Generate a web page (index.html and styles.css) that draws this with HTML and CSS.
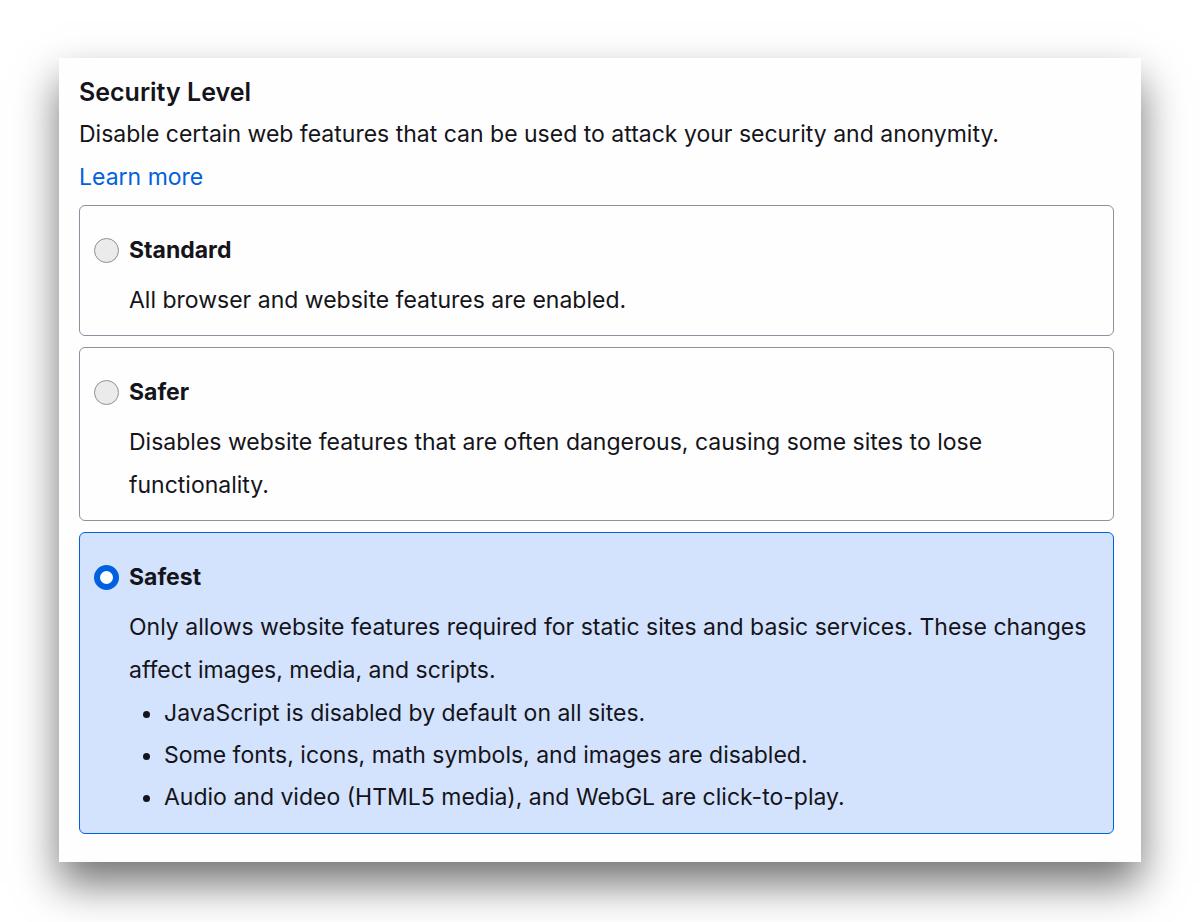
FILE: index.html
```html
<!DOCTYPE html>
<html lang="en">
<head>
  <meta charset="UTF-8">
  <title>Security Level</title>
  <link rel="stylesheet" href="styles.css">
</head>
<body>
  <section class="panel">
    <h2 class="title">Security Level</h2>
    <p class="intro">Disable certain web features that can be used to attack your security and anonymity.</p>
    <a href="#" class="learn">Learn more</a>
    <div class="levels">
      <label class="level">
        <span class="head"><span class="radio"></span>Standard</span>
        <span class="desc">All browser and website features are enabled.</span>
      </label>
      <label class="level">
        <span class="head"><span class="radio"></span>Safer</span>
        <span class="desc">Disables website features that are often dangerous, causing some sites to lose functionality.</span>
      </label>
      <label class="level selected">
        <span class="head"><span class="radio"></span>Safest</span>
        <span class="desc">Only allows website features required for static sites and basic services. These changes affect images, media, and scripts.</span>
        <ul class="list">
          <li>JavaScript is disabled by default on all sites.</li>
          <li>Some fonts, icons, math symbols, and images are disabled.</li>
          <li>Audio and video (HTML5 media), and WebGL are click-to-play.</li>
        </ul>
      </label>
    </div>
  </section>
</body>
</html>
```

FILE: styles.css
```css
* {
  padding: 0;
  margin: 0;
  box-sizing: border-box;
}
body {
  background-color: #fff;
  font-family: Inter, "Noto Sans", sans-serif;
  color: #15141a;
  padding: 58px 59px 60px 59px;
}
.panel {
  width: 1082px;
  height: 804px;
  background-color: #fefefe;
  box-shadow: 0 22px 40px rgba(0, 0, 0, 0.55);
  padding: 22px 27px 0 20px;
}
.title {
  font-size: 25px;
  font-weight: 600;
  line-height: 24px;
  margin-bottom: 9px;
}
.intro {
  font-size: 23px;
  line-height: 43px;
}
.learn {
  display: block;
  font-size: 23px;
  line-height: 43px;
  color: #0061e0;
  text-decoration: none;
}
.levels {
  display: flex;
  flex-direction: column;
  gap: 11px;
  margin-top: 6px;
}
.level {
  display: block;
  border: 1px solid #8f8f9d;
  border-radius: 6px;
  padding: 22px 20px 13px 14px;
  font-size: 23px;
}
.level.selected {
  background-color: #d3e3fd;
  border-color: #0061e0;
  padding-bottom: 15px;
}
.head {
  display: flex;
  align-items: center;
  gap: 10px;
  line-height: 44px;
  font-weight: 700;
}
.radio {
  width: 25px;
  height: 25px;
  border-radius: 50%;
  border: 1.5px solid #8f8f9d;
  background-color: #ebebeb;
}
.selected .radio {
  border: 6px solid #0061e0;
  background-color: #fff;
}
.desc {
  display: block;
  margin: 7px 0 0 35px;
  line-height: 43px;
}
.list {
  margin-left: 35px;
  padding-left: 35px;
  line-height: 42px;
}
```
